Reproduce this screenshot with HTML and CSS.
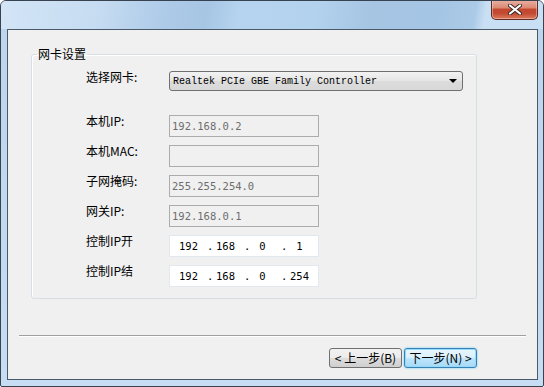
FILE: index.html
```html
<!DOCTYPE html>
<html lang="zh-CN">
<head>
    <meta charset="UTF-8">
    <title>网卡设置</title>
    <link rel="stylesheet" href="styles.css">
</head>
<body>
    <div class="window">
        <div class="titlebar">
            <div class="close-btn">
                <svg width="14" height="11" viewBox="0 0 14 11">
                    <path d="M2 1.5 L12 9.5 M12 1.5 L2 9.5" stroke="#3a2a28" stroke-width="4" stroke-linecap="round"/>
                    <path d="M2 1.5 L12 9.5 M12 1.5 L2 9.5" stroke="#fff" stroke-width="2.2" stroke-linecap="round"/>
                </svg>
            </div>
        </div>
        <div class="client">
            <fieldset class="group">
                <legend>网卡设置</legend>
                <div class="form-grid">
                    <label class="lbl">选择网卡:</label>
                    <div class="combo">
                        <span>Realtek PCIe GBE Family Controller</span>
                        <span class="arrow"></span>
                    </div>

                    <label class="lbl lbl-gap">本机IP:</label>
                    <div class="field disabled row-gap">192.168.0.2</div>

                    <label class="lbl">本机MAC:</label>
                    <div class="field disabled"></div>

                    <label class="lbl">子网掩码:</label>
                    <div class="field disabled">255.255.254.0</div>

                    <label class="lbl">网关IP:</label>
                    <div class="field disabled">192.168.0.1</div>

                    <label class="lbl">控制IP开</label>
                    <div class="field ip">
                        <span class="seg">192</span>
                        <span class="seg"><i>.</i>168</span>
                        <span class="seg"><i>.</i>0</span>
                        <span class="seg"><i>.</i>1</span>
                    </div>

                    <label class="lbl">控制IP结</label>
                    <div class="field ip">
                        <span class="seg">192</span>
                        <span class="seg"><i>.</i>168</span>
                        <span class="seg"><i>.</i>0</span>
                        <span class="seg"><i>.</i>254</span>
                    </div>
                </div>
            </fieldset>

            <div class="separator"></div>

            <div class="buttons">
                <button class="btn">&lt; 上一步(B)</button>
                <button class="btn btn-default">下一步(N) &gt;</button>
            </div>
        </div>
    </div>
</body>
</html>
```

FILE: styles.css
```css
html, body {
    margin: 0;
    padding: 0;
}
body {
    width: 544px;
    height: 387px;
    overflow: hidden;
    background: #fff;
    font-family: "Noto Sans CJK SC", "DejaVu Sans", sans-serif;
    font-size: 12px;
    color: #000;
}
.window {
    box-sizing: border-box;
    width: 544px;
    height: 387px;
    border: 1px solid #38434f;
    border-radius: 6px 6px 2px 2px;
    padding: 0 5px 6px 6px;
    background: linear-gradient(to bottom, #bcd4ec, #c6ddf3);
    display: flex;
    flex-direction: column;
    overflow: hidden;
}
.titlebar {
    height: 28px;
    margin: 0 -5px 0 -6px;
    padding-right: 5px;
    display: flex;
    justify-content: flex-end;
    align-items: flex-start;
    background: linear-gradient(100deg,
        #d3e5f6 0%, #c6dcf2 18%, #aecbe8 30%, #a6c6e4 38%,
        #b6d4ef 44%, #b3d2ee 58%, #a6c5e3 68%, #a5c5e4 80%,
        #aacae7 87%, #c9dff3 89%, #c9dff3 100%);
}
.close-btn {
    box-sizing: border-box;
    width: 47px;
    height: 20px;
    margin-top: -1px;
    border: 1px solid #5b2b25;
    border-top: none;
    border-radius: 0 0 5px 5px;
    background: linear-gradient(to bottom,
        #eab3a5 0%, #dc8a74 40%, #c4472f 50%, #c24a33 70%, #dd7a5c 100%);
    box-shadow: inset 0 0 0 1px rgba(255, 220, 210, 0.45);
    display: flex;
    align-items: center;
    justify-content: center;
}
.client {
    flex: 1;
    border: 1px solid #4b5a6b;
    background: #f0f0f0;
    display: flex;
    flex-direction: column;
}
.group {
    margin: 16px 60px 0 23px;
    padding: 0 0 11px 0;
    border: 1px solid #d5dfe5;
    box-shadow: inset 1px 1px 0 #fff;
    border-radius: 3px;
    min-width: 0;
}
.group legend {
    margin-left: 5px;
    padding: 0 1px;
    font-size: 12px;
    line-height: 16px;
}
.form-grid {
    display: grid;
    grid-template-columns: 83px auto;
    row-gap: 8px;
    padding-left: 54px;
    padding-top: 9px;
    align-items: start;
}
.lbl {
    line-height: 14px;
    margin-top: -1px;
    white-space: nowrap;
}
.row-gap {
    margin-top: 16px;
}
.lbl.lbl-gap {
    margin-top: 15px;
}
.combo {
    box-sizing: border-box;
    width: 294px;
    height: 20px;
    border: 1px solid #707070;
    border-radius: 3px;
    background: linear-gradient(to bottom, #f2f2f2, #e5e5e5 50%, #dcdcdc 51%, #d8d8d8);
    display: flex;
    align-items: center;
    justify-content: space-between;
    padding: 0 5px 0 3px;
    font-family: "Liberation Mono", monospace;
    font-size: 10px;
}
.arrow {
    width: 0;
    height: 0;
    border-left: 4px solid transparent;
    border-right: 4px solid transparent;
    border-top: 4px solid #000;
}
.field {
    box-sizing: border-box;
    width: 150px;
    height: 22px;
    display: flex;
    align-items: center;
    font-family: "DejaVu Sans Mono", monospace;
    font-size: 10.5px;
}
.disabled {
    border: 1px solid #acacac;
    background: #f0f0f0;
    color: #6d6d6d;
    padding-left: 2px;
}
.ip {
    border: 1px solid #e2e8ef;
    background: #fff;
    display: grid;
    grid-template-columns: repeat(4, 1fr);
}
.seg {
    position: relative;
    text-align: center;
}
.seg i {
    position: absolute;
    left: 0;
    font-style: normal;
}
.separator {
    margin: 36px 11px 0 11px;
    height: 1px;
    background: #a0a0a0;
    border-bottom: 1px solid #fff;
}
.buttons {
    display: flex;
    justify-content: flex-end;
    gap: 2px;
    margin: 11px 60px 0 0;
}
.btn {
    box-sizing: border-box;
    width: 73px;
    height: 20px;
    padding: 0;
    border: 1px solid #707070;
    border-radius: 3px;
    background: linear-gradient(to bottom, #f2f2f2, #ebebeb 50%, #dddddd 51%, #cfcfcf);
    font-family: "Noto Sans CJK SC", sans-serif;
    font-size: 12px;
    line-height: 16px;
    color: #000;
}
.btn-default {
    border-color: #3c7fb1;
    background: linear-gradient(to bottom, #eaf6fd, #d9f0fc 50%, #bee6fd 51%, #a7d9f5);
    box-shadow: 0 0 2px #48c6f5, inset 0 0 0 1px #8fdcff;
}
```
